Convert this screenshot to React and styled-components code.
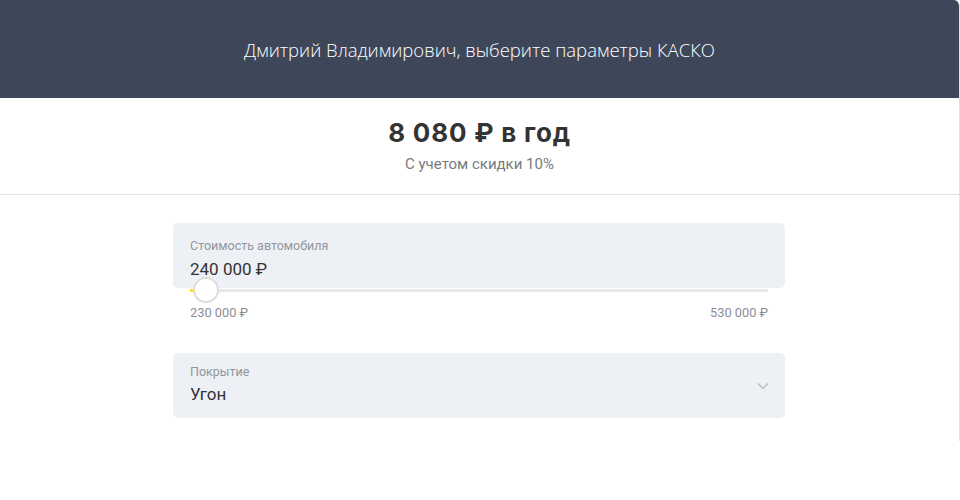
import React from "react";
import styled, { createGlobalStyle } from "styled-components";

const Global = createGlobalStyle`
  html, body { margin: 0; padding: 0; background: #fff; }
  body { font-family: Roboto, "Noto Sans", "Liberation Sans", sans-serif; color: #333; }
`;

const Card = styled.div`
  width: 959px;
  height: 441px;
  border-right: 1px solid #e2e2e2;
  border-top-right-radius: 6px;
  overflow: hidden;
  background: #fff;
  display: flex;
  flex-direction: column;
`;

const Header = styled.header`
  height: 98px;
  background: #3e4759;
  display: flex;
  align-items: center;
  justify-content: center;
`;

const Title = styled.h1`
  margin: 0;
  font-family: "Open Sans", Roboto, sans-serif;
  font-weight: 300;
  font-size: 18.5px;
  color: #fff;
`;

const PriceSection = styled.section`
  padding: 19px 0 20px;
  border-bottom: 1px solid #e0e0e0;
  display: flex;
  flex-direction: column;
  align-items: center;
  gap: 5px;
`;

const Price = styled.div`
  font-family: Inter, Roboto, sans-serif;
  font-size: 26px;
  line-height: 32px;
  font-weight: 700;
  letter-spacing: 0.8px;
  color: #333;
`;

const Note = styled.div`
  font-size: 15px;
  line-height: 20px;
  color: #777b80;
`;

const Form = styled.section`
  padding: 28px 1px 0 0;
  display: flex;
  flex-direction: column;
  align-items: center;
`;

const Field = styled.div`
  width: 612px;
  display: flex;
  flex-direction: column;
  margin-bottom: ${(p) => p.$mb || 0}px;
`;

const Box = styled.div`
  position: relative;
  height: 65px;
  box-sizing: border-box;
  padding: ${(p) => p.$pt}px 17px 0;
  background: #edf0f5;
  border-radius: 5px;
  display: flex;
  flex-direction: column;
  gap: ${(p) => p.$gap}px;
`;

const Label = styled.div`
  font-size: 12.5px;
  line-height: 16px;
  color: #92969c;
`;

const Value = styled.div`
  font-size: 17px;
  line-height: 22px;
  color: #333;
`;

const Chevron = styled.svg`
  position: absolute;
  right: 16px;
  top: 29px;
`;

const Track = styled.div`
  position: relative;
  margin: 1px 17px 0;
  height: 3px;
  background: #e8e8e8;
`;

const Fill = styled.div`
  position: absolute;
  left: 0;
  top: 0;
  bottom: 0;
  background: #ffdd2d;
`;

const Thumb = styled.div`
  position: absolute;
  top: -12px;
  width: 26px;
  height: 26px;
  margin-left: -13px;
  box-sizing: border-box;
  border-radius: 50%;
  background: #fff;
  border: 2px solid #dcdcdc;
`;

const Range = styled.div`
  display: flex;
  justify-content: space-between;
  padding: 13px 17px 0;
  font-size: 12.8px;
  line-height: 16px;
  color: #8a8e94;
`;

export default function App() {
  const min = 230000;
  const max = 530000;
  const val = 240000;
  const pct = ((val - min) / (max - min)) * 100 * 0.85;
  return (
    <>
      <Global />
      <Card>
        <Header>
          <Title>Дмитрий Владимирович, выберите параметры КАСКО</Title>
        </Header>
        <PriceSection>
          <Price>8 080 ₽ в год</Price>
          <Note>С учетом скидки 10%</Note>
        </PriceSection>
        <Form>
          <Field $mb={32}>
            <Box $pt={15} $gap={4}>
              <Label>Стоимость автомобиля</Label>
              <Value>240 000 ₽</Value>
            </Box>
            <Track>
              <Fill style={{ width: `${pct}%` }} />
              <Thumb style={{ left: `${pct}%` }} />
            </Track>
            <Range>
              <span>230 000 ₽</span>
              <span>530 000 ₽</span>
            </Range>
          </Field>
          <Field>
            <Box $pt={11} $gap={3}>
              <Label>Покрытие</Label>
              <Value>Угон</Value>
              <Chevron width="12" height="8" viewBox="0 0 12 8" fill="none">
                <path d="M1 1.5l5 5 5-5" stroke="#b4b8be" strokeWidth="1.2" />
              </Chevron>
            </Box>
          </Field>
        </Form>
      </Card>
    </>
  );
}
